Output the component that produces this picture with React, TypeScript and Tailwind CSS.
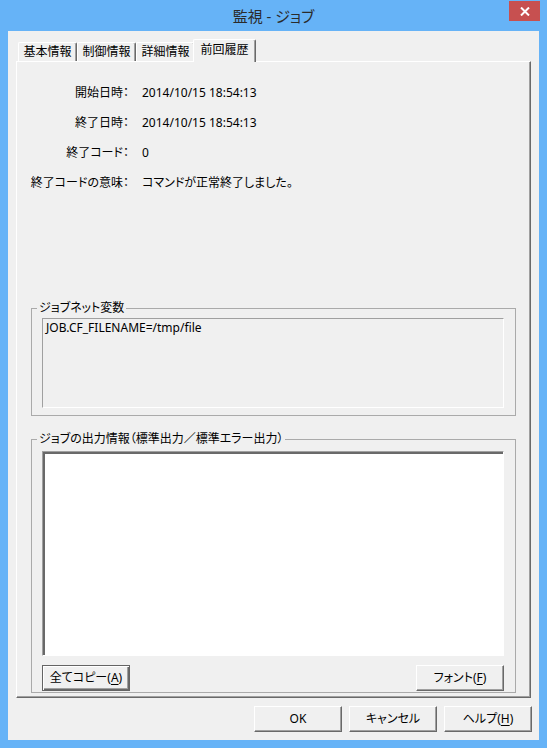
import type { ReactNode } from "react";

const FONT =
  "font-['Noto_Sans','Noto_Sans_CJK_JP',sans-serif] [font-feature-settings:'palt']";

const TABS = ["基本情報", "制御情報", "詳細情報", "前回履歴"];
const ACTIVE_TAB = 3;

const INFO = [
  { label: "開始日時：", value: "2014/10/15 18:54:13" },
  { label: "終了日時：", value: "2014/10/15 18:54:13" },
  { label: "終了コード：", value: "0" },
  { label: "終了コードの意味：", value: "コマンドが正常終了しました。" },
];

function Btn({
  children,
  isDefault,
  className = "",
}: {
  children: ReactNode;
  isDefault?: boolean;
  className?: string;
}) {
  return (
    <button
      className={`w-[88px] h-[26px] flex items-center justify-center bg-[#f0f0f0] text-[12px] leading-[16px] ${
        isDefault
          ? "border border-[#646464] shadow-[inset_1px_1px_0_#fff,inset_-1px_-1px_0_#696969,inset_-2px_-2px_0_#a0a0a0]"
          : "border border-t-white border-l-white border-r-[#696969] border-b-[#696969] shadow-[inset_-1px_-1px_0_#a0a0a0]"
      } ${className}`}
    >
      {children}
    </button>
  );
}

function Mn({ k }: { k: string }) {
  return (
    <>
      (<span className="underline underline-offset-2">{k}</span>)
    </>
  );
}

export default function App() {
  return (
    <div
      className={`w-[547px] h-[748px] bg-[#66b3f7] flex flex-col ${FONT} text-[12px] text-black`}
    >
      {/* Title bar */}
      <div className="relative h-[31px] flex items-center justify-center text-[15px] leading-[20px] text-[#2b2b2b]">
        監視 - ジョブ
        <div className="absolute right-[7px] top-[1px] w-[31px] h-[20px] bg-[#c75050] flex items-center justify-center">
          <svg width="10" height="9" viewBox="0 0 10 9">
            <path d="M1 0.5 L9 8.5 M9 0.5 L1 8.5" stroke="#fff" strokeWidth="2" />
          </svg>
        </div>
      </div>

      {/* Client area */}
      <div className="mx-[8px] h-[709px] bg-[#f0f0f0] px-[8px] flex flex-col">
        {/* Tabs */}
        <div className="h-[30px] flex items-end pl-[2px] [font-feature-settings:normal]">
          {TABS.map((t, i) =>
            i === ACTIVE_TAB ? (
              <div
                key={t}
                className="relative z-10 -mx-[2px] -mb-px w-[63px] h-[23px] pb-[2px] flex items-center justify-center bg-[#f0f0f0] rounded-t-[2px] border-t border-l border-t-white border-l-white border-r border-r-[#696969] shadow-[inset_-1px_0_0_#a0a0a0] leading-[16px]"
              >
                {t}
              </div>
            ) : (
              <div
                key={t}
                className="w-[59px] h-[19px] flex items-center justify-center bg-[#f0f0f0] rounded-t-[2px] border-t border-l border-t-white border-l-white border-r border-r-[#696969] shadow-[inset_-1px_0_0_#a0a0a0] leading-[16px]"
              >
                {t}
              </div>
            )
          )}
        </div>

        {/* Tab panel */}
        <div className="h-[637px] border border-t-white border-l-white border-r-[#696969] border-b-[#696969] shadow-[inset_-1px_-1px_0_#a0a0a0] flex flex-col">
          <div className="pt-[16px] grid grid-cols-[112px_1fr] auto-rows-[30px] items-center leading-[16px]">
            {INFO.map((r) => (
              <div key={r.label} className="contents">
                <div className="text-right">{r.label}</div>
                <div className="pl-[13px]">{r.value}</div>
              </div>
            ))}
          </div>

          {/* ジョブネット変数 */}
          <fieldset className="mt-[102px] mx-[14px] h-[116px] border border-[#aaaaaa] pl-[10px] pr-[11px] pb-[8px]">
            <legend className="-ml-[5px] px-[2px] leading-[16px]">ジョブネット変数</legend>
            <div className="mt-[2px] h-[90px] bg-[#f0f0f0] border border-t-[#a0a0a0] border-l-[#a0a0a0] border-r-white border-b-white pl-[3px] pt-[1px] leading-[16px]">
              JOB.CF_FILENAME=/tmp/file
            </div>
          </fieldset>

          {/* ジョブの出力情報 */}
          <fieldset className="mt-[15px] mx-[14px] h-[262px] border border-[#aaaaaa] pl-[10px] pr-[11px] flex flex-col">
            <legend className="-ml-[5px] px-[2px] leading-[16px]">
              ジョブの出力情報（標準出力／標準エラー出力）
            </legend>
            <div className="mt-[4px] h-[205px] bg-white border border-t-[#a0a0a0] border-l-[#a0a0a0] border-r-white border-b-white shadow-[inset_1px_1px_0_#696969,inset_2px_2px_0_#696969]" />
            <div className="mt-[9px] flex justify-between">
              <Btn isDefault>
                全てコピー<Mn k="A" />
              </Btn>
              <Btn>
                フォント<Mn k="F" />
              </Btn>
            </div>
          </fieldset>
        </div>

        {/* Dialog buttons */}
        <div className="mt-[8px] -mr-[1px] flex justify-end gap-[7px]">
          <Btn>OK</Btn>
          <Btn>キャンセル</Btn>
          <Btn>
            ヘルプ<Mn k="H" />
          </Btn>
        </div>
      </div>
    </div>
  );
}
